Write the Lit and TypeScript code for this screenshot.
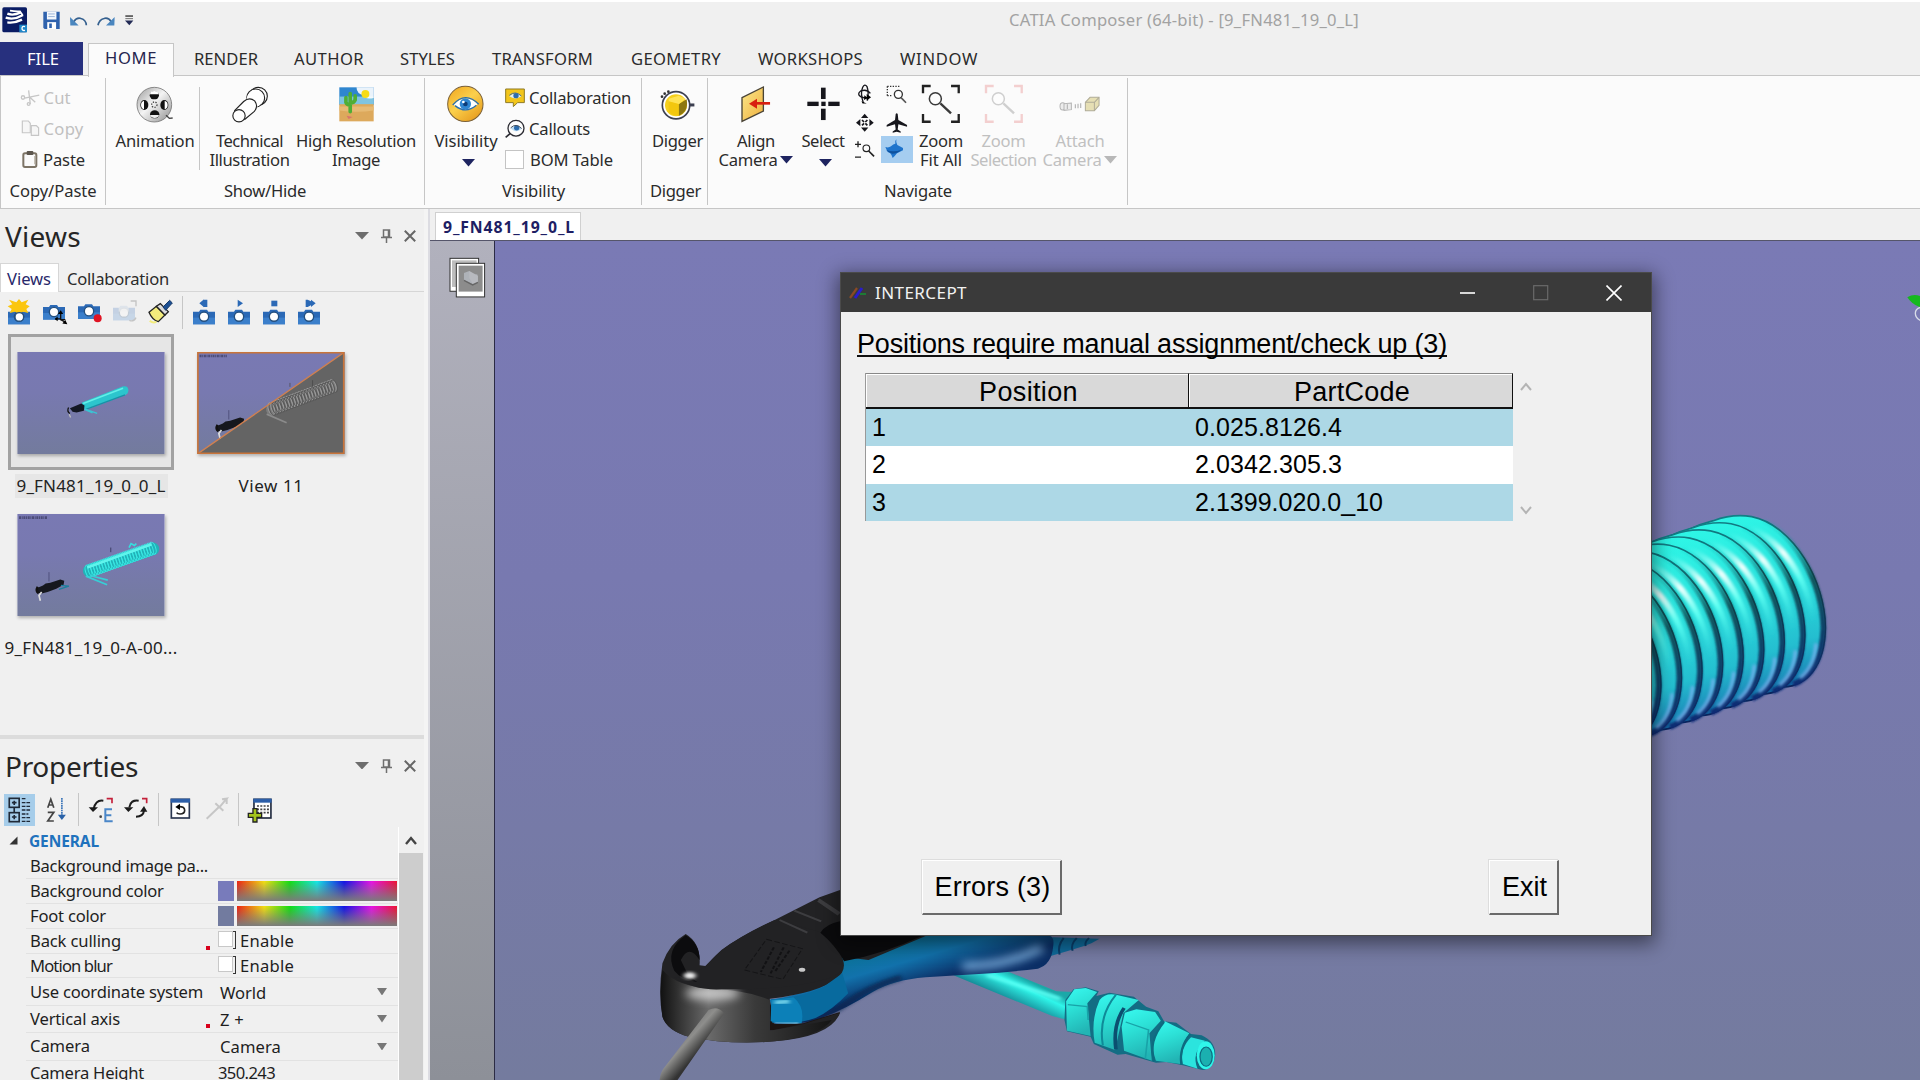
import { LitElement, html, svg, css, TemplateResult } from "lit";
import { customElement, property } from "lit/decorators.js";

/** Inline label whose tracking is tuned so that it takes a given width. */
@customElement("fit-text")
class FitText extends LitElement {
  @property({ type: Number }) w = 0;
  static styles = css`
    :host { display: inline-block; white-space: nowrap; flex: none; }
  `;
  firstUpdated() {
    const range = document.createRange();
    range.selectNodeContents(this);
    const natural = range.getBoundingClientRect().width;
    const count = (this.textContent ?? "").length;
    if (this.w && natural && count) {
      this.style.letterSpacing = `${((this.w - natural) / count).toFixed(3)}px`;
    }
  }
  render() {
    return html`<slot></slot>`;
  }
}

const t = (text: string, w: number) => html`<fit-text w=${w}>${text}</fit-text>`;

const ic = (box: string, w: number, h: number, body: unknown) =>
  html`<svg class="ic" viewBox=${box} width=${w} height=${h} preserveAspectRatio="none">${body}</svg>`;

const icons = {
  app: ic("6 20 78 78", 26, 26, svg`
    <rect x="7" y="21" width="74" height="75" rx="5" fill="#0a1c64"/>
    <path d="M22 40q18 7 40-4M17 52q26 8 52-8M22 66q22 3 44-8" fill="none" stroke="#fff" stroke-width="7"/>
    <path d="M30 31q16 3 30 2l8 12" fill="none" stroke="#fff" stroke-width="5"/>
    <rect x="58" y="73" width="23" height="23" fill="#1f86c8"/>
    <path d="M75 79q-9-3-9 5t9 6" fill="none" stroke="#fff" stroke-width="4"/>`),
  save: ic("124 26 58 64", 19, 21, svg`
    <path d="M128 31h50v53h-46l-4-4z" fill="#2f62ad"/>
    <rect x="139" y="31" width="29" height="24" fill="#f3f7fc"/><path d="M143 38h20M143 46h20" stroke="#9ab4d8" stroke-width="3"/>
    <rect x="140" y="63" width="27" height="21" fill="#fff"/><rect x="146" y="67" width="8" height="14" fill="#2f62ad"/>`),
  undo: ic("206 36 60 44", 20, 15, svg`
    <path d="M220 62q9-14 22-10q15 4 16 20" fill="none" stroke="#35608f" stroke-width="5"/><path d="M209 48l1 25h25z" fill="#4a86bf"/>`),
  redo: ic("288 36 60 44", 20, 15, svg`
    <path d="M334 62q-9-14-22-10q-15 4-18 20" fill="none" stroke="#35608f" stroke-width="5"/><path d="M344 48l-1 25h-25z" fill="#4a86bf"/>`),
  more: ic("372 38 30 38", 10, 13, svg`<rect x="376" y="42" width="23" height="4" fill="#333"/><rect x="376" y="50" width="23" height="3" fill="#777"/><path d="M375 57h25l-12 14z" fill="#222a55"/>`),
  cut: ic("58 268 62 50", 20.6, 17, svg`
    <g fill="none" stroke="#c6c6c6" stroke-width="4"><path d="M84 272l5 40M72 295l44-9M86 291l18 16"/><circle cx="67" cy="293" r="5"/><circle cx="84" cy="312" r="4"/></g>`),
  copy: ic("58 358 62 52", 20.6, 17, svg`
    <g fill="#f6f6f6" stroke="#c6c6c6" stroke-width="3.5"><path d="M65 361h18l6 7v29h-24z"/><path d="M92 375h15l7 7v23h-22z"/></g>`),
  paste: ic("60 446 60 56", 20, 18.6, svg`
    <rect x="70" y="456" width="39" height="41" rx="5" fill="#fafafa" stroke="#7d7466" stroke-width="6"/><rect x="80" y="449" width="20" height="12" rx="3" fill="#5c564e"/>
    <path d="M104 464v25" stroke="#bbb3a6" stroke-width="3"/>`),
  reel: ic("405 255 120 114", 40, 38, svg`
    <defs><linearGradient id="reel" x1="0" y1="0" x2="1" y2="1"><stop offset="0" stop-color="#9a9a9a"/><stop offset=".45" stop-color="#f4f4f4"/><stop offset="1" stop-color="#8c8c8c"/></linearGradient></defs>
    <circle cx="463" cy="314" r="52" fill="url(#reel)" stroke="#777" stroke-width="2.5"/>
    <path d="M498 346l10 9 10-1" fill="none" stroke="#444" stroke-width="4"/>
    <g fill="#111"><ellipse cx="463" cy="286" rx="14" ry="12"/><ellipse cx="464" cy="343" rx="14" ry="12"/><ellipse cx="433" cy="315" rx="12" ry="15"/><ellipse cx="493" cy="315" rx="12" ry="15"/></g>
    <g fill="#fff"><path d="M450 283q1-10 13-10t13 10z"/><path d="M450 345q3 9 14 9t13-9z" fill="#eee"/><path d="M432 302q-9 3-9 13t9 13z"/><path d="M494 302q9 3 9 13t-9 13z"/></g>
    <circle cx="463" cy="314" r="8" fill="none" stroke="#444" stroke-width="4" stroke-dasharray="4 4"/>`),
  bolt: ic("690 253 120 118", 40, 39, svg`
    <g fill="#fff" stroke="#222" stroke-width="3.4"><circle cx="775" cy="287" r="27"/><circle cx="767" cy="292" r="27"/><circle cx="762" cy="298" r="23" stroke="none"/>
    <path d="M703 331L731 303Q748 288 764 301Q776 318 763 333L731 360z" stroke="none"/>
    <path d="M703 331L731 303Q748 288 764 301Q776 318 763 333L733 358" fill="none"/><circle cx="717" cy="346" r="18.5"/></g>`),
  photo: ic("1010 258 112 112", 37, 37, svg`
    <rect x="1014" y="262" width="104" height="54" fill="#2f86cf"/><rect x="1014" y="290" width="104" height="26" fill="#7fc4e0"/>
    <rect x="1014" y="313" width="104" height="52" fill="#dda95c"/><path d="M1014 320h104v12q-50 8-104 0z" fill="#e6ba74"/>
    <path d="M1066 262h52v32q-26 6-30-8-22-4-22-24z" fill="#fff" opacity=".9"/><circle cx="1093" cy="282" r="12" fill="#f7dc16"/>
    <path d="M1047 336v-55M1034 293v14q2 8 13 8M1062 288v12q-3 9-15 9" fill="none" stroke="#4fae35" stroke-width="11" stroke-linecap="round"/>
    <path d="M1036 348l18 4-12 6z" fill="#d9746a"/>`),
  eye: ic("78 44 118 116", 39.4, 38.6, svg`
    <defs><linearGradient id="eye" x1="0" y1="0" x2=".8" y2="1"><stop offset="0" stop-color="#f0a41c"/><stop offset=".5" stop-color="#fbd04c"/><stop offset="1" stop-color="#e69a1c"/></linearGradient></defs>
    <circle cx="136" cy="101" r="53" fill="url(#eye)" stroke="#7a6038" stroke-width="3"/>
    <path d="M101 103q34-36 72-2-36 36-72 2z" fill="#fff"/><path d="M98 104q38-43 78-2M105 106q32 26 64-1" fill="none" stroke="#2a6fae" stroke-width="4"/>
    <circle cx="136" cy="101" r="17" fill="#2e86d2"/><circle cx="136" cy="101" r="7" fill="#0c3c78"/><circle cx="130" cy="95" r="4" fill="#fff"/>`),
  collab: ic("252 48 66 62", 22, 20.6, svg`
    <path d="M257 54h56v41h-20l-13 12v-12h-23z" fill="#f2c51b" stroke="#8f7a24" stroke-width="3"/>
    <path d="M268 76q18-17 36 0-18 13-36 0z" fill="#dff0fb"/><circle cx="288" cy="74" r="8" fill="#2c6cae"/><path d="M268 73q18-15 36 2" fill="none" stroke="#3f6f9c" stroke-width="3"/>`),
  callout: ic("250 140 66 64", 22, 21, svg`
    <circle cx="286" cy="171" r="24" fill="#fdfdfd" stroke="#2c2c33" stroke-width="4"/><path d="M269 187l-14 12" stroke="#2c2c33" stroke-width="5"/>
    <path d="M270 172q16-17 33 1-16 15-33-1z" fill="#bcdcf2"/><circle cx="288" cy="170" r="8" fill="#2c6cae"/><path d="M270 170q16-16 33 2" fill="none" stroke="#45505c" stroke-width="3"/>`),
  digger: ic("718 50 112 98", 37.4, 32.6, svg`
    <circle cx="769" cy="102" r="41" fill="#fff" stroke="#3c3f50" stroke-width="5"/><circle cx="769" cy="102" r="33" fill="#f5cf1d"/>
    <path d="M777 98l24-14q5 30-12 43l-12 7z" fill="#8d7710"/><path d="M747 82l30-9 21 9-21 17-30-8z" fill="#ffe353"/><path d="M747 90l30 8v36q-22-2-30-14z" fill="#f3c70e"/>
    <path d="M808 101h16" stroke="#3c3f50" stroke-width="9"/><g fill="#333"><circle cx="727" cy="76" r="4"/><circle cx="735" cy="67" r="4"/><circle cx="746" cy="61" r="4"/></g>`),
  align: ic("122 46 94 114", 31.4, 38, svg`
    <defs><linearGradient id="al" x1="0" y1="0" x2="1" y2="1"><stop offset="0" stop-color="#fbe98c"/><stop offset="1" stop-color="#eeae3c"/></linearGradient></defs>
    <path d="M128 84l64-32v72l-64 31z" fill="url(#al)" stroke="#4a4436" stroke-width="4"/><path d="M212 101h-44" stroke="#d81e10" stroke-width="8"/><path d="M149 102l24-15v30z" fill="#d81e10"/>`),
  select: ic("317 50 104 106", 34.6, 35.4, svg`
    <g fill="#16161c"><rect x="362" y="55" width="14" height="34"/><rect x="362" y="118" width="14" height="34"/><rect x="321" y="97" width="34" height="13"/><rect x="384" y="97" width="34" height="13"/><rect x="363" y="97" width="13" height="13"/></g>`),
  orbit: ic("462 42 52 62", 17.4, 20.6, svg`
    <g fill="none" stroke="#16161c" stroke-width="4"><path d="M484 99Q474 70 482 52Q488 40 495 50Q501 66 496 92"/><path d="M505 70Q494 56 476 63Q464 72 476 80Q486 86 500 82"/></g><path d="M494 72l13 10-13 10z"/><path d="M487 76l10 8-11 6zM478 94l16 7-12 0z"/>`),
  pan: ic("460 128 58 58", 19.4, 19.4, svg`
    <path d="M489 130l11 13h-22zM489 184l11-13h-22zM463 157l13-11v22zM516 157l-13-11v22z" fill="#16161c"/><path d="M481 149l6 6M497 149l-6 6M481 165l6-6M497 165l-6-6" stroke="#16161c" stroke-width="5"/>`),
  zoomPm: ic("456 208 64 58", 21.4, 19.4, svg`
    <g fill="none" stroke="#222"><path d="M459 221h18M468 212v18M459 259h18" stroke-width="4"/><circle cx="493" cy="233" r="10" stroke-width="3.5"/><path d="M500 241l16 16" stroke-width="5"/></g>`),
  zoomBox: ic("552 44 64 58", 21.4, 19.4, svg`
    <path d="M556 48h36M556 48v30M556 76h14" fill="none" stroke="#333" stroke-width="4" stroke-dasharray="4 4"/><circle cx="589" cy="72" r="12" fill="#fff" stroke="#333" stroke-width="4"/><path d="M597 82l15 15" stroke="#555" stroke-width="5"/>`),
  plane: ic("554 124 64 64", 21.4, 21.4, svg`
    <path d="M583 130q3-5 6 0l2 18 26 15v5l-26-7-2 15 9 6v4l-12-3-12 3v-4l9-6-2-15-25 7v-5l25-15z" fill="#16161c"/>`),
  dolphin: ic("546 198 96 81", 32, 27, svg`
    <rect x="546" y="198" width="96" height="81" fill="#a5cdf0"/><path d="M592 208q-2 10 3 17l17 9v7l-18 9q-6 8-13 14-2-9-8-15-8-1-10-9l-4-9q10 3 17-2 7-7 13-8-3-7 3-13z" fill="#1e74cc"/><path d="M562 240q22 8 46-1-14 12-28 12-12-2-18-11z" fill="#0e529e"/>`),
  fit: (c: string, c2: string) => ic("662 44 118 118", 39.4, 39.4, svg`
    <path d="M668 72v-22h23M752 50h23v22M668 134v23h23M752 157h23v-23" fill="none" stroke=${c} stroke-width="7"/>
    <circle cx="705" cy="88" r="18" fill="#fff" fill-opacity=".6" stroke=${c2} stroke-width="4.5"/><path d="M720 102l32 30" stroke=${c2} stroke-width="7"/>`),
  attach: ic("1076 76 130 54", 43.4, 18, svg`
    <g fill="#ececec" stroke="#b4b4b4" stroke-width="3"><ellipse cx="1090" cy="110" rx="8" ry="11"/><path d="M1094 102l22-2v20l-22 2z"/><path d="M1104 104v14M1128 104v12M1136 102v14M1144 101v14" stroke-width="3.5"/></g>
    <path d="M1158 98l14-15h27v24l-14 16h-27z" fill="#e6dfb4" stroke="#b0ac98" stroke-width="3"/><path d="M1158 98h27v25M1185 98l14-15" fill="none" stroke="#b0ac98" stroke-width="3"/>`),
};

const camera = svg`<path d="M0 12h18l4-6h20l4 6h20v38h-66z" fill="#2b69b6"/><path d="M0 30h66v20h-66z" fill="#3b7fcb"/><circle cx="33" cy="27" r="14" fill="#fff" stroke="#24507f" stroke-width="4"/>`;
const cam = (extra: unknown, dy = 26) => ic("0 0 78 80", 26, 26.6, svg`<g transform="translate(3 ${dy})">${camera}</g>${extra}`);

const viewTools = [
  cam(svg`<path d="M36 0l8 10 20-8-8 14 12 6-10 8 6 12-16-4-12 6-12-6-16 4 6-12-12-8 14-6-10-14 22 8z" fill="#fbc60f"/><circle cx="37" cy="54" r="13" fill="#fff" stroke="#24507f" stroke-width="4"/>`),
  cam(svg`<path d="M56 40v22h14M56 62l14 8M40 60h16" fill="none" stroke="#111" stroke-width="4"/><path d="M56 34l8 11h-16zM76 76l-15-2 9-11zM38 60l9-7v14z"/>`, 12),
  cam(svg`<circle cx="62" cy="58" r="12" fill="#e01323"/>`, 10),
  ic("0 0 78 80", 26, 26.6, svg`<g opacity=".22"><g transform="translate(3 14)">${camera}</g></g><path d="M56 6h16v16M72 56q-6 14-20 8" fill="none" stroke="#c4c4c4" stroke-width="4"/><path d="M20 8h30v30h-30z" fill="#f0f0f0" opacity=".6"/>`),
  ic("0 0 78 80", 26, 26.6, svg`<path d="M6 40l22-18 26 26-20 20q-18-4-28-28z" fill="#f3ec7c" stroke="#222" stroke-width="4"/><path d="M28 22l12-8 24 24-10 10z" fill="#ddd" stroke="#222" stroke-width="4"/><path d="M48 24l20-20 8 8-20 22z" fill="#1c4f93" stroke="#173a68" stroke-width="3"/><path d="M8 66q12 8 20 2" stroke="#f3ec7c" stroke-width="6" fill="none"/>`),
];
const playTools = [
  cam(svg`<path d="M22 13l14-12v24zM34 2h12v22h-12z" fill="#2b69b6"/>`),
  cam(svg`<path d="M32 2l16 11-16 11z" fill="#2b69b6"/>`),
  cam(svg`<rect x="28" y="5" width="18" height="17" fill="#2b69b6"/>`),
  cam(svg`<path d="M26 2h6l10 5v-5l14 11-14 11v-5l-10 5h-6z" fill="#2b69b6"/>`),
];

const arrow = (c: string, w = 13) => ic("0 0 14 8", w, 7.5, svg`<path d="M0 0h14l-7 8z" fill=${c}/>`);
const paneTools = html`<span class="pane-tools">
  ${arrow("#6d6d6d", 14)}
  ${ic("0 0 11 14", 11, 14, svg`<path d="M2.5 1h6v7h-6zM0 8.5h11M5.5 9v5M7.5 1v7" fill="none" stroke="#707070" stroke-width="1.5"/>`)}
  ${ic("0 0 12 12", 12, 12, svg`<path d="M.8 .8l10.4 10.4M11.2 .8L.8 11.2" stroke="#666" stroke-width="2"/>`)}
</span>`;

const sky = svg`<defs><linearGradient id="sky" x1="0" y1="0" x2="0" y2="1"><stop offset="0" stop-color="#7979b3"/><stop offset=".4" stop-color="#7879b0"/><stop offset="1" stop-color="#737b9d"/></linearGradient></defs>`;

const thumb1 = html`<svg class="shot" viewBox="52 425 443 307" width="148" height="102">${sky}
  <rect x="52" y="425" width="443" height="307" fill="url(#sky)"/>
  <path d="M246 577L368 529q18-4 18 12 0 10-12 15L262 598q-14 0-16-21z" fill="#2cc5cd"/><path d="M250 580L370 534" stroke="#63eee8" stroke-width="5"/>
  <path d="M258 598L376 554" stroke="#1b8fa6" stroke-width="4"/><path d="M254 596l38 14M254 598l24 10" stroke="#3ac4d4" stroke-width="4"/>
  <path d="M210 594l34-14 10 6-2 16-22 5-12-2z" fill="#141824"/><path d="M206 592q-6 12 4 18" stroke="#111" stroke-width="4" fill="none"/><path d="M208 612l4 10" stroke="#bbb" stroke-width="4" fill="none"/></svg>`;

const coilRings = (n: number, x0: number, y0: number, dx: number, dy: number, c: string) =>
  Array.from({ length: n }, (_, i) => svg`<ellipse cx=${x0 + dx * i} cy=${y0 + dy * i} rx="9" ry="19" transform="rotate(-18 ${x0 + dx * i} ${y0 + dy * i})" fill="none" stroke=${c} stroke-width="3"/>`);

const miniGun = svg`<path d="M2 18l18-8 8-6 14-2 30-10 12 4-2 12-22 12-26 10-18 4-12-2z" fill="#15171d"/><path d="M16 30l-8 10 4 16" stroke="#ddd" stroke-width="5" fill="none"/><path d="M4 14q-7 12 3 20" stroke="#111" stroke-width="7" fill="none"/><path d="M38-30v28" stroke="#3d3d66" stroke-width="2"/>`;

const thumb2 = html`<svg class="shot" viewBox="592 425 442 307" width="148" height="102">
  ${sky}<rect x="592" y="425" width="442" height="307" fill="url(#sky)"/>
  <path d="M1034 425v307h-442z" fill="#646464"/>
  <g transform="translate(648 630)">${miniGun}</g>
  <path d="M814 598L996 528" stroke="#7c7c7c" stroke-width="32" stroke-linecap="round"/>
  ${coilRings(22, 814, 596, 8.8, -3.3, "#9a9a9a")}${coilRings(22, 818, 597, 8.8, -3.3, "#585858")}
  <path d="M800 612l60 26" stroke="#8b8b8b" stroke-width="5"/>
  <path d="M1032 427L594 730" stroke="#d08050" stroke-width="4"/><path d="M870 518v12M938 510v20" stroke="#444" stroke-width="2"/>
  <rect x="593" y="427" width="439" height="303" fill="none" stroke="#c8743a" stroke-width="5"/>
  <path d="M598 437h82" stroke="#4c4c78" stroke-width="8" stroke-dasharray="6 2 3 2"/></svg>`;

const thumb3 = html`<svg class="shot" viewBox="52 161 443 307" width="148" height="102">${sky}
  <rect x="52" y="161" width="443" height="307" fill="url(#sky)"/>
  <path d="M268 332L460 266" stroke="#22b2b8" stroke-width="38" stroke-linecap="round"/>
  ${coilRings(24, 266, 333, 8.4, -3, "#3ae8e4")}
  <path d="M262 322L456 252" stroke="#5ff4ec" stroke-width="8"/>
  <path d="M258 348l64 26M270 346l54 14" stroke="#37cfd6" stroke-width="5"/><path d="M388 262l6-12 10 6 6-6" stroke="#35dede" stroke-width="5" fill="none"/>
  <path d="M333 262v14" stroke="#3d3d66" stroke-width="3"/>
  <g transform="translate(109 366)">${miniGun}<path d="M74 10l24 2-30 10" stroke="#1d7f9c" stroke-width="4" fill="none"/></g>
  <path d="M57 172h84" stroke="#4c4c78" stroke-width="8" stroke-dasharray="6 2 3 2"/></svg>`;

const ring = (i: number) => svg`<g transform="translate(${-61.7 * i} ${21.4 * i})">
  <path d="M480 800Q560 742 640 722Q700 700 755 710C880 735 977 905 976 1045C974 1160 920 1218 850 1221L480 1334z" fill="url(#tube)" stroke="url(#rim)" stroke-width="5"/>
  <path d="M790 722C880 760 968 905 970 1045C968 1140 930 1194 880 1213" fill="none" stroke="url(#edge)" stroke-width="17" filter="url(#soft1)"/>
  <path d="M740 738C840 775 925 890 944 1040" fill="none" stroke="url(#glow)" stroke-width="18" filter="url(#soft)"/>
  <path d="M948 1090Q944 1160 900 1194" fill="none" stroke="#74b4ee" stroke-width="10" filter="url(#soft)" opacity=".9"/>
</g>`;

const scene = html`<svg class="scene" viewBox="495 241 1425 839" width="1425" height="839">
  <defs>
    <linearGradient id="tube" gradientUnits="userSpaceOnUse" x1="700" y1="705" x2="760" y2="1260"><stop offset="0" stop-color="#2ef6e6"/><stop offset=".35" stop-color="#2be0dc"/><stop offset=".7" stop-color="#24bed0"/><stop offset=".88" stop-color="#1c8cba"/><stop offset="1" stop-color="#0c3f86"/></linearGradient>
    <linearGradient id="rim" gradientUnits="userSpaceOnUse" x1="700" y1="705" x2="760" y2="1260"><stop offset="0" stop-color="#128088"/><stop offset=".3" stop-color="#06282e"/><stop offset="1" stop-color="#0a2560"/></linearGradient>
    <linearGradient id="edge" gradientUnits="userSpaceOnUse" x1="700" y1="710" x2="760" y2="1230"><stop offset="0" stop-color="#1fc4c4" stop-opacity="0"/><stop offset=".4" stop-color="#0b4a52" stop-opacity=".9"/><stop offset="1" stop-color="#0b2c74"/></linearGradient>
    <linearGradient id="glow" gradientUnits="userSpaceOnUse" x1="740" y1="740" x2="930" y2="1040"><stop offset="0" stop-color="#5ffff2" stop-opacity="0"/><stop offset=".35" stop-color="#f0fffd"/><stop offset=".6" stop-color="#5ffff2"/><stop offset="1" stop-color="#30dfe2" stop-opacity="0"/></linearGradient>
    <filter id="soft1" x="-20%" y="-20%" width="140%" height="140%"><feGaussianBlur stdDeviation="3"/></filter>
    <filter id="soft" x="-30%" y="-30%" width="160%" height="160%"><feGaussianBlur stdDeviation="5"/></filter>
    <filter id="soft2" x="-50%" y="-50%" width="200%" height="200%"><feGaussianBlur stdDeviation="12"/></filter>
    <linearGradient id="body" x1="0" y1="0" x2="1" y2="0"><stop offset="0" stop-color="#111"/><stop offset=".28" stop-color="#6a6a6a"/><stop offset=".55" stop-color="#3a3a3a"/><stop offset="1" stop-color="#141414"/></linearGradient>
    <linearGradient id="lever" gradientUnits="userSpaceOnUse" x1="640" y1="230" x2="690" y2="370"><stop offset="0" stop-color="#0a7396"/><stop offset=".5" stop-color="#1272ac"/><stop offset="1" stop-color="#0b2f66"/></linearGradient>
    <linearGradient id="hose" gradientUnits="userSpaceOnUse" x1="930" y1="350" x2="890" y2="420"><stop offset="0" stop-color="#1ba8a8"/><stop offset=".3" stop-color="#2ff6ea"/><stop offset="1" stop-color="#127f8e"/></linearGradient>
    <linearGradient id="rod" gradientUnits="userSpaceOnUse" x1="100" y1="520" x2="155" y2="560"><stop offset="0" stop-color="#777"/><stop offset=".4" stop-color="#8e8e8c"/><stop offset="1" stop-color="#333"/></linearGradient>
    <linearGradient id="nut" x1="0" y1="0" x2=".3" y2="1"><stop offset="0" stop-color="#38faf0"/><stop offset=".45" stop-color="#2ce0d6"/><stop offset="1" stop-color="#22b4b4"/></linearGradient>
  </defs>
  <g transform="translate(1500 280) scale(.33333)">${[0, 1, 2, 3, 4, 5, 6, 7, 8].map(ring)}
    <path d="M1222 52q18-12 38-4v34q-26-10-38-30z" fill="#15b81e"/><path d="M1262 82q-16 4-16 18t16 22" fill="none" stroke="#d8dce8" stroke-width="4"/>
  </g>
  <g transform="translate(640 860) scale(.40816 .33333)">
    <path d="M768 346L900 334L1020 394L1062 396L1040 478L1010 468z" fill="url(#hose)"/>
    <path d="M850 345l180 72" stroke="#5ffff4" stroke-width="9" filter="url(#soft)"/>
    <path d="M1010 232l116 4-20 14-18 8-22 8-20 8-40 14z" fill="#0f6a9a"/><path d="M1028 284q-6-26 10-50M1060 272q-6-18 10-38M1092 258q-4-10 8-24" stroke="#0a3f6c" stroke-width="5" fill="none"/>
    <path d="M470 300L700 228H1005Q1016 232 1012 262Q1008 314 975 326Q910 336 830 342L700 352Q620 360 570 396Q500 450 440 476Q400 494 330 492L318 420Q420 400 470 352z" fill="url(#lever)"/>
    <path d="M790 318Q890 322 985 262" stroke="#8cc4f2" stroke-width="26" opacity=".75" fill="none" filter="url(#soft2)"/>
    <path d="M395 490Q450 480 505 430Q560 380 640 352" stroke="#07244c" stroke-width="18" opacity=".65" fill="none" filter="url(#soft)"/>
    <path d="M318 420V512L440 508Q482 490 490 456L400 490L330 492z" fill="#1c1412"/>
    <path d="M490 90L440 112L330 180Q250 225 200 270Q175 300 160 318L146 316Q150 250 112 222Q72 250 55 310Q44 400 55 470Q66 512 120 530Q220 556 330 544Q470 530 490 458L400 492L318 512V416Q440 398 480 356Q510 330 494 290L560 300L700 228H490z" fill="#222224"/>
    <path d="M55 330Q90 380 180 388Q260 390 318 420V512L470 480Q440 530 330 544Q220 556 120 530Q66 512 55 470Q46 400 55 330z" fill="url(#body)"/>
    <ellipse cx="178" cy="400" rx="66" ry="22" fill="#fff" opacity=".6" filter="url(#soft2)"/>
    <path d="M84 352Q130 392 200 388Q380 390 470 352Q510 330 494 290Q480 240 440 215L330 180Q250 225 200 270Q172 300 160 322L110 352z" fill="#222224"/>
    <path d="M112 226Q60 270 84 332Q100 358 140 366L118 346L100 300Q120 250 146 300Q146 250 112 226z" fill="#0c0c0e"/>
    <ellipse cx="122" cy="347" rx="15" ry="10" fill="#eee" filter="url(#soft)"/>
    <path d="M442 218Q456 192 490 184V228H690Q600 280 500 304Q480 256 442 218z" fill="#0b0b0d"/>
    <path d="M438 118L490 160M436 122L486 164M378 152L444 184M342 180L410 218" stroke="#3d3d40" stroke-width="6" fill="none"/>
    <path d="M310 238L398 266L350 358L256 330z" fill="none" stroke="#141416" stroke-width="2.5" stroke-dasharray="14 6"/><path d="M328 262L296 336M352 262L320 340M366 272L330 336" stroke="#121214" stroke-width="5" stroke-dasharray="10 5"/>
    <ellipse cx="397" cy="329" rx="8" ry="6" fill="#c8c8c8"/>
    <path d="M320 418Q400 412 450 380L496 340L510 400Q470 452 430 474Q380 496 324 488z" fill="#086a9e"/>
    <path d="M322 420L376 412Q404 440 396 490Q350 492 320 484z" fill="#0c80b8"/><path d="M330 428l36-4" stroke="#8be6f6" stroke-width="10" filter="url(#soft)"/><path d="M330 487q24 6 58 2" stroke="#9ed9f4" stroke-width="4" fill="none" filter="url(#soft1)"/>
    <path d="M168 450Q190 436 206 460L92 660H48Q50 636 60 622z" fill="url(#rod)"/>
    <path d="M1042 420L1062 388L1092 382L1124 394L1118 408L1150 398L1210 410L1240 440L1270 454L1284 484L1314 488L1350 522L1376 526Q1412 546 1409 588Q1404 628 1378 630L1330 616L1290 606L1264 608L1190 582L1170 584L1112 552L1104 530L1046 514L1040 480z" fill="#136d84"/>
    <path d="M1044 424L1064 388L1092 384L1120 396L1096 430L1104 528L1046 512z" fill="url(#nut)"/><path d="M1048 434L1096 440L1098 480" fill="none" stroke="#18a3a8" stroke-width="4"/>
    <path d="M1126 420Q1140 398 1166 404L1222 420L1184 460L1164 570L1114 548Q1104 480 1126 420z" fill="url(#nut)"/><path d="M1166 404Q1122 470 1134 556" fill="none" stroke="#0f8a98" stroke-width="5"/><path d="M1186 444q-28 50-20 124" fill="none" stroke="#0b4f70" stroke-width="9"/>
    <path d="M1188 458L1216 448L1262 456L1276 482L1248 520L1254 602L1186 572L1180 500z" fill="url(#nut)"/><path d="M1190 486L1246 510L1238 596" fill="none" stroke="#18a3a8" stroke-width="4"/>
    <path d="M1286 484L1346 520Q1322 560 1324 612L1264 602Q1244 540 1286 484z" fill="url(#nut)"/>
    <path d="M1350 532L1384 542Q1350 580 1366 626L1330 612Q1322 566 1350 532z" fill="#2be4de"/>
    <path d="M1284 486q-40 60-24 118M1348 522q-28 40-22 92" fill="none" stroke="#0d6b80" stroke-width="5"/>
    <ellipse cx="1386" cy="586" rx="22" ry="42" fill="#2ff6ea"/><ellipse cx="1387" cy="590" rx="15" ry="29" fill="#1bb0b0" stroke="#0d6b80" stroke-width="3"/>
  </g>
</svg>`;

const big = (icon: TemplateResult, lines: [string, number][], cls = "", drop: unknown = "") => html`
  <div class="big ${cls}"><span class="big-ic">${icon}</span>${lines.map(([s, w], i) => html`<span class="line">${t(s, w)}${i === 1 ? drop : ""}</span>`)}</div>`;

const tabs: [string, number][] = [
  ["RENDER", 64], ["AUTHOR", 70], ["STYLES", 55], ["TRANSFORM", 101],
  ["GEOMETRY", 90], ["WORKSHOPS", 105], ["WINDOW", 78],
];

const enable = html`<span class="check"></span><span class="bracket"></span>${t("Enable", 54)}`;
const combo = (s: string, w: number) => html`<span class="combo">${t(s, w)}${arrow("#777", 10)}</span>`;
const hue = (c: string) => html`<span class="swatch ${c}"></span><span class="hue"></span>`;

const rows: { h: string; label: [string, number]; value: unknown; dot?: boolean }[] = [
  { h: "s", label: ["Background image pa...", 178], value: "" },
  { h: "s", label: ["Background color", 133.5], value: hue("bg") },
  { h: "s", label: ["Foot color", 76], value: hue("foot") },
  { h: "s", label: ["Back culling", 91], value: enable, dot: true },
  { h: "s", label: ["Motion blur", 82], value: enable },
  { h: "m", label: ["Use coordinate system", 173], value: combo("World", 46) },
  { h: "m", label: ["Vertical axis", 90], value: combo("Z +", 24), dot: true },
  { h: "m", label: ["Camera", 60], value: combo("Camera", 61) },
  { h: "s", label: ["Camera Height", 114], value: t("350.243", 57) },
];

@customElement("app-root")
class AppRoot extends LitElement {
  static styles = css`
    :host { display: block; width: 1920px; height: 1080px; overflow: hidden; font: 16.6px/20px "Noto Sans", "Open Sans", sans-serif; color: #2b2b2b; }
    * { box-sizing: border-box; }
    svg { display: block; flex: none; }
    .app { position: relative; width: 1920px; height: 1080px; overflow: hidden; background: #f0f0f0; display: grid; grid-template: 41px 34px 134px minmax(0, 1fr) / 100%; }
    .titlebar { display: flex; align-items: center; padding: 0 0 3px 2px; border-top: 2px solid #fff; }
    .titlebar .ic { margin-right: 12px; }
    .titlebar .ic:first-child { margin-right: 14px; }
    .titlebar .ic:nth-child(2) { margin-right: 8px; }
    .titlebar .ic:nth-child(3) { margin-right: 7px; }
    .titlebar .ic:nth-child(4) { margin-right: 8px; }
    .title { margin-left: 863px; color: #a2a2a2; }
    .tabs { display: grid; grid-template-columns: 83px 5px 86px 20px 100px 106px 92px 139px 127px 142px 1fr; align-items: center; }
    .tab { padding-bottom: 1px; }
    .file { background: #27307e; color: #fff; height: 34px; display: grid; place-items: center; padding-left: 3px; }
    .home { grid-column: 3; height: 34px; margin-top: 2px; background: #fbfbfb; border: 1px solid #c6c6c6; border-bottom: none; color: #26264e; display: grid; place-items: center; position: relative; z-index: 1; padding-bottom: 5px;}
    .tab:nth-child(3) { grid-column: 5; }
    .ribbon { background: #fbfbfb; border: 1px solid #c6c6c6; border-right: none; display: flex; padding: 2px 0; }
    .group { display: flex; flex-direction: column; border-right: 1px solid #c6c6c6; height: 127px; }
    .group .body { height: 103px; display: flex; }
    .cap { display: grid; place-items: center; height: 20px; }
    .g1 { width: 105px; } .g2 { width: 319px; } .g3 { width: 217px; } .g4 { width: 66px; } .g5 { width: 420px; }
    .g4 .cap { padding-left: 2px; } .g3 .cap, .g5 .cap { padding-left: 1px; }
    .list, .group .body.list { display: grid; grid-template-rows: repeat(3, 31px); align-content: start; padding-top: 4px; }
    .list > span { display: flex; align-items: center; gap: 3px; }
    .g1 .list { padding-left: 19px; }
    .g3 .list { margin-left: -3px; }
    .off { color: #c0c0c0; }
    .big { display: flex; flex-direction: column; align-items: center; }
    .big-ic { height: 52px; display: grid; place-items: center; margin-bottom: 1px; }
    .line { height: 19px; line-height: 19px; display: flex; align-items: center; position: relative; }
    .line .ic { position: absolute; left: 100%; top: 6px; margin-left: 3px; }
    .under { margin-top: 9px; margin-left: 4px; }
    .w-an { width: 93px; padding-left: 5px; } .w-te { width: 99px; } .w-hi { width: 114px; }
    .rule { width: 1px; height: 83px; margin-top: 9px; background: #c6c6c6; }
    .w-vi { width: 82px; } .w-di { width: 68px; padding-left: 6px; } .w-al { width: 80px; margin-left: 8px; } .w-se { width: 54px; }
    .w-al .line:last-child, .w-at .line:last-child { left: -8px; }
    .w-zf { width: 52px; } .w-zs { width: 73px; } .w-at { width: 80px; }
    .box { width: 19px; height: 19px; background: #fff; border: 1px solid #c4c4c4; margin: 0 3px 0 1px; }
    .nav { display: grid; grid-template: repeat(3, 27.5px) / 32px 32px; place-items: center; padding-top: 3px; align-content: start; margin: 0 2px 0 -1px;}
    .main { display: grid; grid-template-columns: 424px 6px 1fr; min-height: 0; }
    .left { display: flex; flex-direction: column; min-height: 0; overflow: hidden; }
    .gutter { background: linear-gradient(90deg, #f4f4f4 4px, #dcdce2 4px); }
    .pane-head { display: flex; justify-content: space-between; align-items: center; font-size: 28px; line-height: 38px; color: #262626; padding: 0 7px 0 5px; }
    .pane-tools { display: flex; align-items: center; gap: 12px; padding-right: 1px; }
    .views { height: 526px; }
    .views .pane-head { height: 54px; }
    .subtabs { display: flex; height: 29px; border-bottom: 1px solid #d6d6d6; align-items: stretch; }
    .subtabs span { padding: 6px 0 0 8px; }
    .subtabs .on { background: #fff; color: #28286a; width: 59px; padding: 5px 0 0 6px; border: 1px solid #d6d6d6; border-bottom: none; height: 29px; }
    .tools { display: flex; align-items: center; }
    .vt { height: 42px; padding: 0 0 2px 7px; gap: 9px; }
    .vt .rule { height: 33px; margin: 0; }
    .gallery { display: grid; grid-template-columns: 166px 166px; column-gap: 14px; padding: 0 0 0 8px; }
    .item { display: flex; flex-direction: column; align-items: center; }
    .item .frame { width: 166px; height: 136px; padding: 15px 0 0 6px; border: 3px solid transparent; }
    .item.sel .frame { border-color: #a2a2a2; background: #e6e6e6; }
    .item .name { margin-top: 4px; height: 24px; line-height: 24px; padding: 0 2px; color: #222; font-size: 17px; }
    .item.sel .name { background: #e6e6e6; }
    .item.third { margin-top: -2px; }
    .shot { box-shadow: 1px 2px 3px #0004; }
    .props { border-top: 4px solid #dcdcdc; height: 345px; display: flex; flex-direction: column; }
    .props > * { flex: none; }
    .props .pane-head { height: 53px; }
    .pt { height: 35px; padding-left: 4px; }
    .pt .rule { height: 33px; margin: 0; }
    .grid-wrap { display: grid; grid-template-columns: 398px 25px; height: 270px; }
    .prow { display: grid; grid-template-columns: 179px 13px 1fr; margin-left: 26px; padding-left: 4px; align-items: center; border-bottom: 1px solid #e2e2e2; color: #1e1e1e; }
    .s { height: 24.9px; } .m { height: 27.4px; }
    .gen { display: flex; align-items: center; height: 27px; font-weight: 700; font-size: 15.5px; color: #1f72bd; padding-left: 9px; gap: 11px; }
    .val { display: flex; align-items: center; height: 100%; margin-left: -4px; }
    .dot { display: block; width: 4px; height: 4px; background: #d8001c; margin: 14px 0 0 -3px; }
    .check { width: 15px; height: 16px; background: #fff; border: 1px solid #c8c8c8; margin-bottom: 4px; }
    .bracket { width: 3px; height: 18px; border: 1px solid #333; border-left: none; margin: 0 4px 2px 0; }
    .swatch { width: 16px; height: 20px; } .bg { background: #787bbb; } .foot { background: #727b9f; }
    .hue { width: 160px; height: 20px; margin-left: 3px; background: linear-gradient(180deg, transparent, #7b7b7b), linear-gradient(90deg, #f02010, #f4e010 17%, #10e010 33%, #10e8e8 50%, #1010e8 67%, #e810e8 84%, #f01030); }
    .combo { display: flex; align-items: center; justify-content: space-between; width: 169px; padding-left: 2px; }
    .combo fit-text { padding-top: 2px; }
    .scroll { background: #f0f0f0; border-left: 1px solid #fff; display: flex; flex-direction: column; align-items: center; }
    .scroll .ic { margin: 9px 0 8px; }
    .scroll i { display: block; width: 24px; flex: 1; background: #cdcdcd; }
    .doc { display: grid; grid-template: 32px 1fr / 64px 1fr; min-height: 0; }
    .doctabs { grid-column: 1 / 3; padding: 3px 0 0 5px; border-bottom: 1px solid #55556a; }
    .doctab { width: 146px; height: 28px; background: #fff; border: 1px solid #d0d0d0; border-bottom: none; font-weight: 700; font-size: 15.8px; color: #1e1e64; display: grid; place-items: center; padding: 0 0 0 2px; }
    .side { background: linear-gradient(180deg, #b1b1bd, #8d9098); padding: 16px 0 0 19px; }
    .view { background: linear-gradient(180deg, #7a7ab5 0%, #7879b0 40%, #747b9e 100%); border-left: 1px solid #2b2b44; }
    .dialog { position: absolute; left: 840px; top: 272px; width: 812px; height: 664px; background: #f0f0f0; border: 1px solid #4a4a4a; box-shadow: 0 5px 18px 3px #0007; font-family: "Liberation Sans", Arial, sans-serif; color: #000; display: flex; flex-direction: column; }
    .dt { height: 39px; flex: none; background: #3a3a3a; color: #f2f2f2; font: 17px/36px "Noto Sans", sans-serif; display: flex; align-items: center; padding: 0 29px 0 8px; }
    .dt .x { margin-left: auto; display: flex; align-items: center; gap: 57px; }
    .dt fit-text { margin-left: 9px; }
    .h { margin: 18px 0 0 16px; font-size: 27px; line-height: 28px; height: 45px; }
    .h fit-text { border-bottom: 2px solid #111; height: 27px; }
    .tw { display: grid; grid-template-columns: 648px 26px; margin-left: 24px; margin-top: -2px;}
    .table { display: grid; grid-template-columns: 323px 324px; grid-template-rows: 36px repeat(3, 37.3px); border-left: 1px solid #999; }
    .th { background: #d9d9d9; border: 1px solid #111; border-bottom-width: 2px; border-top-color: #888; border-left: none; box-shadow: inset 1px 1px #fff; font-size: 27px; display: grid; place-items: center; padding: 3px 0 0 3px; }
    .td { font-size: 25px; padding: 0 0 1px 6px; display: flex; align-items: center; background: #add8e6; }
    .td.w { background: #fff; }
    .sc { display: flex; flex-direction: column; justify-content: space-between; align-items: center; padding: 9px 0 6px; }
    .foot-row { margin-top: auto; display: flex; justify-content: space-between; padding: 0 92px 20px 81px; }
    .btn { height: 55px; font-size: 27px; display: grid; place-items: center; border: 1px solid #fff; border-right: 2px solid #6a6a6a; border-bottom: 2px solid #6a6a6a; box-shadow: -1px -1px #ddd; background: #f0f0f0; padding: 0 0 0 2px; }
    .b1 { width: 140px; } .b2 { width: 70px; }
  `;

  render() {
    return html`<div class="app">
      <div class="titlebar">${icons.app}${icons.save}${icons.undo}${icons.redo}${icons.more}<span class="title">${t("CATIA Composer (64-bit) - [9_FN481_19_0_L]", 350)}</span></div>
      <div class="tabs">
        <span class="file">${t("FILE", 32)}</span><span class="home">${t("HOME", 52)}</span>
        ${tabs.map(([s, w]) => html`<span class="tab">${t(s, w)}</span>`)}
      </div>
      <div class="ribbon">
        <div class="group g1"><div class="body list"><span class="off">${icons.cut}${t("Cut", 27)}</span><span class="off">${icons.copy}${t("Copy", 40)}</span><span>${icons.paste}${t("Paste", 42)}</span></div><span class="cap">${t("Copy/Paste", 87)}</span></div>
        <div class="group g2"><div class="body">
          ${big(icons.reel, [["Animation", 79]], "w-an")}<i class="rule"></i>
          ${big(icons.bolt, [["Technical", 67], ["Illustration", 80]], "w-te")}
          ${big(icons.photo, [["High Resolution", 120], ["Image", 48]], "w-hi")}</div><span class="cap">${t("Show/Hide", 82)}</span></div>
        <div class="group g3"><div class="body">
          <div class="big w-vi"><span class="big-ic">${icons.eye}</span><span class="line">${t("Visibility", 63)}</span><span class="under">${arrow("#1e2460")}</span></div>
          <div class="list"><span>${icons.collab}${t("Collaboration", 102)}</span><span>${icons.callout}${t("Callouts", 61)}</span><span><i class="box"></i>${t("BOM Table", 83)}</span></div></div>
          <span class="cap">${t("Visibility", 63)}</span></div>
        <div class="group g4"><div class="body">${big(icons.digger, [["Digger", 51]], "w-di")}</div><span class="cap">${t("Digger", 51)}</span></div>
        <div class="group g5"><div class="body">
          ${big(icons.align, [["Align", 38], ["Camera", 59]], "w-al", arrow("#1e2460"))}
          <div class="big w-se"><span class="big-ic">${icons.select}</span><span class="line">${t("Select", 43)}</span><span class="under">${arrow("#1e2460")}</span></div>
          <div class="nav">${icons.orbit}${icons.zoomBox}${icons.pan}${icons.plane}${icons.zoomPm}${icons.dolphin}</div>
          ${big(icons.fit("#222", "#3a3a3a"), [["Zoom", 44], ["Fit All", 42]], "w-zf")}
          ${big(icons.fit("#f3cfcf", "#cfcfcf"), [["Zoom", 44], ["Selection", 66]], "w-zs off")}
          ${big(icons.attach, [["Attach", 49], ["Camera", 59]], "w-at off", arrow("#b8b8b8"))}</div>
          <span class="cap">${t("Navigate", 68)}</span></div>
      </div>
      <div class="main">
        <div class="left">
          <div class="views">
            <div class="pane-head">${t("Views", 76)}${paneTools}</div>
            <div class="subtabs"><span class="on">${t("Views", 44)}</span><span>${t("Collaboration", 102)}</span></div>
            <div class="tools vt">${viewTools}<i class="rule"></i>${playTools}</div>
            <div class="gallery">
              <div class="item sel"><div class="frame">${thumb1}</div><span class="name">${t("9_FN481_19_0_0_L", 149)}</span></div>
              <div class="item"><div class="frame">${thumb2}</div><span class="name">${t("View 11", 65)}</span></div>
              <div class="item third"><div class="frame">${thumb3}</div><span class="name">${t("9_FN481_19_0-A-00...", 173)}</span></div>
            </div>
          </div>
          <div class="props">
            <div class="pane-head">${t("Properties", 133)}${paneTools}</div>
            <div class="tools pt">
              ${ic("12 164 94 96", 31, 32, svg`<rect x="12" y="164" width="94" height="96" fill="#a6cdea"/><g fill="none" stroke="#1f2937" stroke-width="5"><rect x="28" y="177" width="30" height="27"/><rect x="28" y="220" width="30" height="27"/><path d="M43 204v16M36 190h14M43 184v13M36 233h14M43 227v13"/><path d="M66 178h14M66 190h26M66 201h26M66 212h26M66 224h20M66 235h26M66 246h26" stroke-width="4" stroke-dasharray="11 3"/></g>`)}
              ${ic("106 164 128 96", 43, 32, svg`<path d="M144 205l9-25 9 25M147 197h12M144 219h18l-18 26h18" fill="none" stroke="#444" stroke-width="5"/><path d="M186 176v52" stroke="#3a74b8" stroke-width="5" stroke-dasharray="5 2"/><path d="M174 226h24l-12 16z" fill="#2a62a8"/>`)}
              <i class="rule"></i>
              ${ic("235 164 237 96", 79, 32, svg`<path d="M308 184q-22-4-29 24M414 184q-24-4-28 20M406 232q22 0 24-18" fill="none" stroke="#1c1c1c" stroke-width="6"/><path d="M264 204h28l-15 14zM370 204h28l-15 14zM430 200l10 17h-22z" fill="#1c1c1c"/><path d="M318 178h16v14M424 178h14v14" fill="none" stroke="#c4203a" stroke-width="5"/><path d="M334 210h-20v36h22M314 228h18" fill="none" stroke="#4a86c8" stroke-width="6"/><circle cx="300" cy="232" r="4" fill="#444"/>`)}
              <i class="rule"></i>
              ${ic("475 164 237 96", 79, 32, svg`<rect x="512" y="180" width="54" height="56" fill="#fff" stroke="#2a3650" stroke-width="5"/><rect x="510" y="178" width="58" height="12" fill="#2c5ea8"/><path d="M532 202q20-2 20 11 0 11-14 11-8 0-10-4" fill="none" stroke="#222" stroke-width="5"/><path d="M524 203l14-10v19z"/><path d="M618 238l36-34M644 192l24 22M656 204l22-26-14 2M678 178v16" fill="none" stroke="#c6c6c6" stroke-width="6"/>`)}
              <i class="rule"></i>
              ${ic("714 164 110 96", 36.6, 32, svg`<rect x="759" y="180" width="51" height="56" fill="#fff" stroke="#222c40" stroke-width="5"/><rect x="757" y="178" width="55" height="12" fill="#2c5ea8"/><path d="M768 200h36M768 210h36M768 220h36" stroke="#444" stroke-width="5" stroke-dasharray="6 4"/><path d="M756 208h12v14h14v12h-14v14h-12v-14h-14v-12h14z" fill="#a4c41c" stroke="#222" stroke-width="4"/>`)}
            </div>
            <div class="grid-wrap">
              <div>
                <div class="gen">${ic("0 0 9 9", 9, 9, svg`<path d="M8.5 .5v8h-8z" fill="#333"/>`)}${t("GENERAL", 70)}</div>
                ${rows.map(r => html`<div class="prow ${r.h}"><span>${t(r.label[0], r.label[1])}</span><span>${r.dot ? html`<i class="dot"></i>` : ""}</span><span class="val">${r.value}</span></div>`)}
              </div>
              <div class="scroll">${ic("0 0 12 9", 12, 9, svg`<path d="M1 8l5-6 5 6" fill="none" stroke="#444" stroke-width="2.4"/>`)}<i></i></div>
            </div>
          </div>
        </div>
        <div class="gutter"></div>
        <div class="doc">
          <div class="doctabs"><span class="doctab">${t("9_FN481_19_0_L", 132)}</span></div>
          <div class="side">${ic("1346 142 110 122", 36.6, 40.6, svg`<rect x="1349" y="146" width="86" height="99" fill="#fff" stroke="#333" stroke-width="3"/><rect x="1355" y="152" width="74" height="80" fill="#bdbdbd"/><rect x="1368" y="161" width="85" height="101" fill="#fff" stroke="#333" stroke-width="3"/><rect x="1375" y="168" width="72" height="78" fill="#8c8c8c"/><path d="M1391 190l16-6 12 12 12-2v18l-14 12-26-12z" fill="#aeb2b8"/><path d="M1407 184l26 14v20l-14 7-12-20z" fill="#b8babf"/><path d="M1391 212l26 14 16-8" fill="none" stroke="#666" stroke-width="4"/>`)}</div>
          <div class="view">${scene}</div>
        </div>
      </div>
      <div class="dialog">
        <div class="dt">${ic("0 0 17 14", 17, 14, svg`<path d="M1 12L8 2" stroke="#8a4a24" stroke-width="2.2"/><path d="M6 12L13 2" stroke="#2a1ccc" stroke-width="3"/><path d="M11 8h6" stroke="#1d7a34" stroke-width="2"/>`)}${t("INTERCEPT", 92)}
          <span class="x">
            ${ic("0 0 16 16", 16, 16, svg`<path d="M0 8h15" stroke="#fff" stroke-width="1.6"/>`)}
            ${ic("0 0 16 16", 16, 16, svg`<rect x=".7" y=".7" width="14" height="14" fill="none" stroke="#6a6a6a" stroke-width="1.2"/>`)}
            ${ic("0 0 16 16", 16, 16, svg`<path d="M.5 .5l15 15M15.5 .5l-15 15" stroke="#fff" stroke-width="1.6"/>`)}
          </span></div>
        <div class="h">${t("Positions require manual assignment/check up (3)", 590)}</div>
        <div class="tw">
          <div class="table">
            <span class="th">${t("Position", 99)}</span><span class="th">${t("PartCode", 116)}</span>
            <span class="td">1</span><span class="td">${t("0.025.8126.4", 147)}</span>
            <span class="td w">2</span><span class="td w">${t("2.0342.305.3", 147)}</span>
            <span class="td">3</span><span class="td">${t("2.1399.020.0_10", 188)}</span>
          </div>
          <div class="sc">
            ${ic("0 0 12 9", 12, 9, svg`<path d="M1 8l5-6 5 6" fill="none" stroke="#b4b4b4" stroke-width="2"/>`)}
            ${ic("0 0 12 9", 12, 9, svg`<path d="M1 1l5 6 5-6" fill="none" stroke="#b4b4b4" stroke-width="2"/>`)}
          </div>
        </div>
        <div class="foot-row"><span class="btn b1">${t("Errors (3)", 116)}</span><span class="btn b2">${t("Exit", 45)}</span></div>
      </div>
    </div>`;
  }
}
